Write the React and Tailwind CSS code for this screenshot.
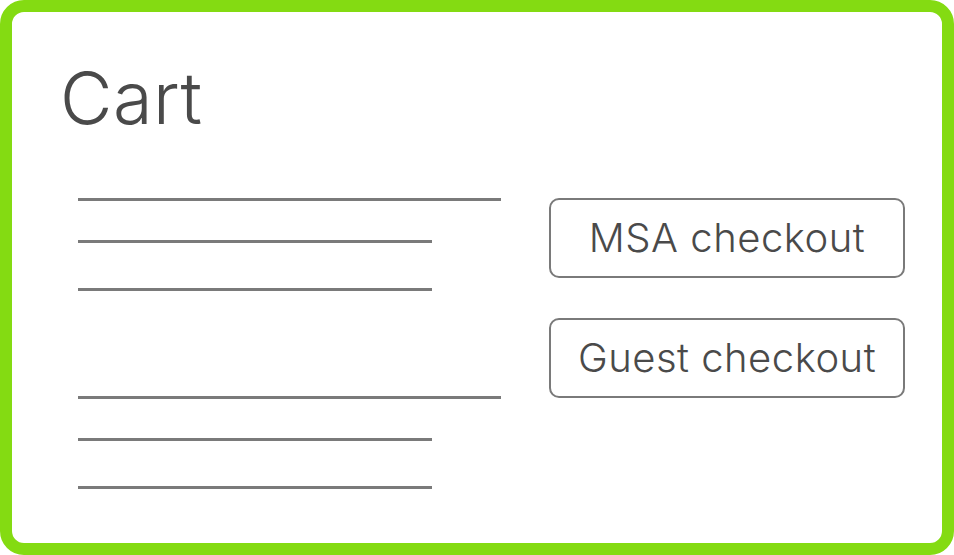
function Line({ wide }) {
  return <div className={wide ? 'h-[3px] w-[423px] bg-[#7a7a7a]' : 'h-[3px] w-[354px] bg-[#7a7a7a]'} />;
}

function LineGroup() {
  return (
    <div className="flex flex-col">
      <Line wide />
      <div className="mt-[39px]"><Line /></div>
      <div className="mt-[45px]"><Line /></div>
    </div>
  );
}

function CheckoutButton({ children }) {
  return (
    <button className="flex h-[80px] w-[356px] items-center justify-center rounded-[10px] border-2 border-[#7a7a7a] bg-white text-[40px] font-light tracking-[0.5px] text-[#4a4a4a]" type="button">
      {children}
    </button>
  );
}

export default function App() {
  return (
    <div className="h-[555px] w-[954px] bg-white font-['Inter','Liberation_Sans',sans-serif]">
      <div className="h-full w-full rounded-[24px] border-[12px] border-[#84db12] bg-white">
        <h1 className="pl-[48px] pt-[50px] text-[72px] font-light leading-none tracking-[0.5px] text-[#4a4a4a]">Cart</h1>

        <div className="mt-[64px] flex">
          <div className="ml-[66px] flex flex-col gap-[105px]">
            <LineGroup />
            <LineGroup />
          </div>
          <div className="ml-[48px] flex flex-col gap-[40px]">
            <CheckoutButton>MSA checkout</CheckoutButton>
            <CheckoutButton>Guest checkout</CheckoutButton>
          </div>
        </div>
      </div>
    </div>
  );
}
